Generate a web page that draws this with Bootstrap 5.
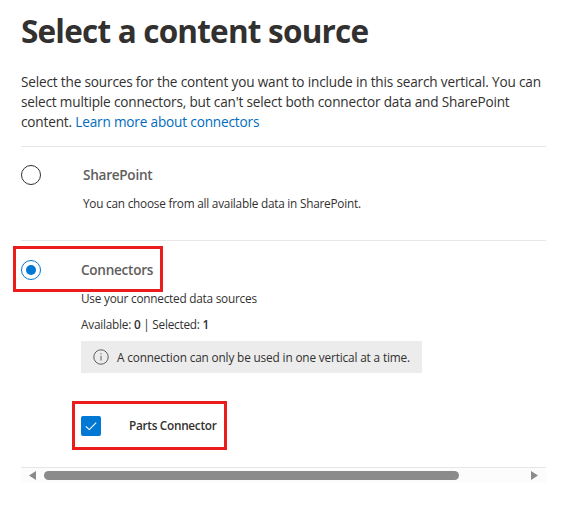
<!DOCTYPE html>
<html lang="en">
<head>
<meta charset="utf-8">
<meta name="viewport" content="width=device-width, initial-scale=1">
<title>Select a content source</title>
<link href="https://cdn.jsdelivr.net/npm/bootstrap@5.3.0/dist/css/bootstrap.min.css" rel="stylesheet">
<style>
body{font-family:"Open Sans","Noto Sans",sans-serif;color:#323130;background:#fff;font-size:14px;line-height:20px;overflow:hidden}
.panel{width:525px;margin-left:21px;padding-top:10px}
.panel-title{font-size:31.5px;line-height:42px;font-weight:700;letter-spacing:-.8px;white-space:nowrap}
.intro{margin-top:20px;height:74px;font-size:13.6px;letter-spacing:-.17px;white-space:nowrap}
.intro a{color:#006cbe}
.option{border-top:1px solid #e6e6e6}
.option-sp{height:94px;padding-top:18px}
.option-con{height:227px;padding-top:19px}
.ring{width:20px;height:20px;border:1px solid #323130;border-radius:50%;flex:none}
.ring.on{border-color:#0078d4}
.ring.on::after{content:"";width:10px;height:10px;border-radius:50%;background:#0078d4}
.copy{margin-left:40px}
.option-sp .copy{margin-left:42px}
.label{font-size:13.6px;font-weight:600;color:#605e5c;line-height:20px;letter-spacing:-.28px}
.sub{font-size:11.8px;line-height:16px;letter-spacing:-.23px;white-space:nowrap}
.con-text{margin-top:10px}
.avail{margin-top:10px}
.notice{width:341px;height:32px;background:#ececec;margin-top:9px;padding-left:12px}
.notice svg{margin-right:8px}
.notice-text{letter-spacing:-.15px}
.tick{width:20px;height:20px;background:#0078d4;border-radius:2px;flex:none}
.picked{margin-top:43px;height:20px}
.picked .name{margin-left:28px;margin-top:-2px;font-weight:600;letter-spacing:-.3px}
.frame{position:absolute;border:3px solid #ed1c1c;pointer-events:none}
.frame-con{left:-8px;top:5px;width:150px;height:46px}
.frame-part{left:-9px;top:-15px;width:155px;height:49px}
.scroller{height:16px;border-top:1px solid #e6e6e6;background:#fcfcfc;padding:0 8px}
.thumb{width:415px;height:9px;border-radius:5px;background:#8b8b8b;margin-left:8px}
</style>
</head>
<body>
<main class="panel">
  <h1 class="panel-title mb-0">Select a content source</h1>
  <p class="intro mb-0">Select the sources for the content you want to include in this search vertical. You can<br>select multiple connectors, but can't select both connector data and SharePoint<br>content. <a href="#" class="text-decoration-none">Learn more about connectors</a></p>

  <section class="option option-sp d-flex align-items-start">
    <span class="ring"></span>
    <div class="copy">
      <div class="label">SharePoint</div>
      <div class="sub con-text">You can choose from all available data in SharePoint.</div>
    </div>
  </section>

  <section class="option option-con d-flex align-items-start position-relative">
    <span class="ring on d-flex align-items-center justify-content-center"></span>
    <div class="copy">
      <div class="label">Connectors</div>
      <div class="sub con-text">Use your connected data sources</div>
      <div class="sub avail">Available: <b class="fw-semibold">0</b> | Selected: <b class="fw-semibold">1</b></div>
      <div class="notice d-flex align-items-center">
        <svg width="16" height="16" viewBox="0 0 16 16" fill="none" stroke="#605e5c"><circle cx="8" cy="8" r="7.2"/><path d="M8 6.8v4.7M8 4.2v1.2"/></svg>
        <span class="sub notice-text">A connection can only be used in one vertical at a time.</span>
      </div>
      <div class="picked d-flex align-items-center position-relative">
        <span class="tick d-flex align-items-center justify-content-center"><svg width="14" height="14" viewBox="0 0 14 14" fill="none" stroke="#fff" stroke-width="1.1"><path d="M1.8 7.3 5.3 10.6 12.2 3.6"/></svg></span>
        <span class="sub name">Parts Connector</span>
        <span class="frame frame-part"></span>
      </div>
    </div>
    <span class="frame frame-con"></span>
  </section>

  <div class="scroller d-flex align-items-center">
    <svg width="7" height="9" viewBox="0 0 7 9"><path d="M7 0v9L0 4.5z" fill="#8b8b8b"/></svg>
    <span class="thumb"></span>
    <svg class="ms-auto" width="7" height="9" viewBox="0 0 7 9"><path d="M0 0v9L7 4.5z" fill="#8b8b8b"/></svg>
  </div>
</main>
<script src="https://cdn.jsdelivr.net/npm/bootstrap@5.3.0/dist/js/bootstrap.bundle.min.js"></script>
</body>
</html>
